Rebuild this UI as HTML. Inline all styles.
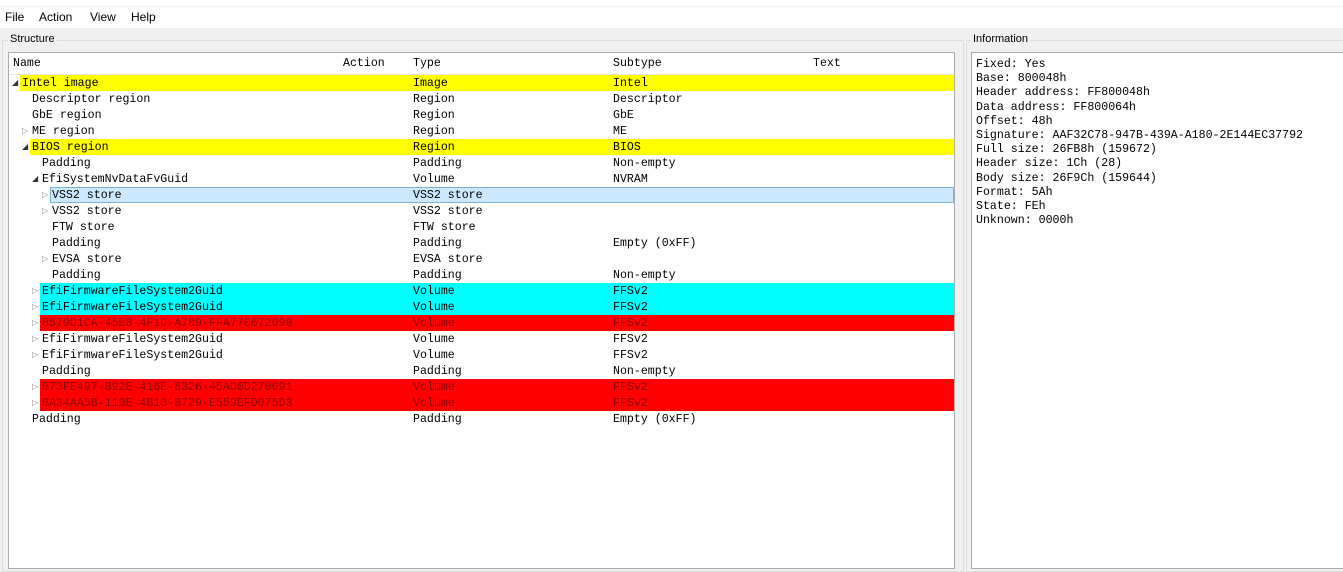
<!DOCTYPE html>
<html><head><style>
body{margin:0;width:1343px;height:562px;background:#f0f0f0;position:relative;overflow:hidden;font-family:"Liberation Sans",sans-serif;}
.m{position:absolute;font-family:"Liberation Mono",monospace;font-size:11.6px;line-height:16px;color:#000;white-space:pre}
.menu{position:absolute;top:0;left:0;width:1343px;height:28px;background:#fff;font-size:12px}
.menu span{position:absolute;top:10px}
.gb{position:absolute;border:1px solid #dcdcdc}
.lbl{position:absolute;font-size:11px;background:#f0f0f0;padding:0 2px;color:#000}
.panel{position:absolute;background:#fff;border:1px solid #adadad}
.arr{position:absolute;font-size:8px;color:#888;line-height:16px}
</style></head><body>
<div class="menu"><span style="left:5px">File</span><span style="left:39px">Action</span><span style="left:90px">View</span><span style="left:131px">Help</span></div>
<div style="position:absolute;top:6px;left:0;width:1343px;height:1px;background:#f0f0f0"></div>
<div class="gb" style="left:2px;top:40px;width:960px;height:530px"></div>
<div class="lbl" style="left:8px;top:33px">Structure</div>
<div class="gb" style="left:966px;top:40px;width:380px;height:530px"></div>
<div class="lbl" style="left:971px;top:33px">Information</div>
<div class="panel" style="left:8px;top:52px;width:945px;height:515px">
<div style="position:absolute;left:0;top:0;width:945px;height:21px;border-bottom:1px solid #e5e5e5"></div>
<div class="m" style="left:4px;top:3px">Name</div>
<div class="m" style="left:334px;top:3px">Action</div>
<div class="m" style="left:404px;top:3px">Type</div>
<div class="m" style="left:604px;top:3px">Subtype</div>
<div class="m" style="left:804px;top:3px">Text</div>
<div id="rows"></div>
</div>
<div class="panel" style="left:971px;top:52px;width:380px;height:515px">
<div class="m" style="left:4px;top:5px;line-height:14.2px">Fixed: Yes
Base: 800048h
Header address: FF800048h
Data address: FF800064h
Offset: 48h
Signature: AAF32C78-947B-439A-A180-2E144EC37792
Full size: 26FB8h (159672)
Header size: 1Ch (28)
Body size: 26F9Ch (159644)
Format: 5Ah
State: FEh
Unknown: 0000h</div>
</div>
<script>
var R=[
[0,'d','Intel image','Image','Intel','#ffff00'],
[1,'','Descriptor region','Region','Descriptor'],
[1,'','GbE region','Region','GbE'],
[1,'c','ME region','Region','ME'],
[1,'d','BIOS region','Region','BIOS','#ffff00'],
[2,'','Padding','Padding','Non-empty'],
[2,'d','EfiSystemNvDataFvGuid','Volume','NVRAM'],
[3,'c','VSS2 store','VSS2 store','','sel'],
[3,'c','VSS2 store','VSS2 store',''],
[3,'','FTW store','FTW store',''],
[3,'','Padding','Padding','Empty (0xFF)'],
[3,'c','EVSA store','EVSA store',''],
[3,'','Padding','Padding','Non-empty'],
[2,'c','EfiFirmwareFileSystem2Guid','Volume','FFSv2','#00ffff'],
[2,'c','EfiFirmwareFileSystem2Guid','Volume','FFSv2','#00ffff'],
[2,'c','8579D1CA-45E8-4F1C-A789-FFA770672099','Volume','FFSv2','#ff0000'],
[2,'c','EfiFirmwareFileSystem2Guid','Volume','FFSv2'],
[2,'c','EfiFirmwareFileSystem2Guid','Volume','FFSv2'],
[2,'','Padding','Padding','Non-empty'],
[2,'c','B73FE497-B92E-416E-8326-45AD0D270091','Volume','FFSv2','#ff0000'],
[2,'c','BA34AA5B-110E-4B10-B729-E559EFD075D3','Volume','FFSv2','#ff0000'],
[1,'','Padding','Padding','Empty (0xFF)']];
var h='';
R.forEach(function(r,i){
 var top=22+i*16, tx=13+10*r[0], bg=r[5], col=bg=='#ff0000'?'#8b0000':'#000';
 if(bg=='sel') h+='<div style="position:absolute;left:'+(tx-2)+'px;top:'+top+'px;width:'+(945-tx)+'px;height:14px;background:#cce8ff;border:1px solid #7ab4d9"></div>';
 else if(bg) h+='<div style="position:absolute;left:'+(tx-2)+'px;top:'+top+'px;width:'+(945-tx+2)+'px;height:16px;background:'+bg+'"></div>';
 if(r[1]=='d') h+='<div class="arr" style="left:'+(tx-10)+'px;top:'+top+'px;color:#333">&#9698;</div>';
 if(r[1]=='c') h+='<div class="arr" style="left:'+(tx-10)+'px;top:'+top+'px">&#9655;</div>';
 h+='<div class="m" style="color:'+col+';left:'+tx+'px;top:'+(top+1)+'px">'+r[2]+'</div>';
 h+='<div class="m" style="color:'+col+';left:404px;top:'+(top+1)+'px">'+r[3]+'</div>';
 h+='<div class="m" style="color:'+col+';left:604px;top:'+(top+1)+'px">'+r[4]+'</div>';
});
document.getElementById('rows').innerHTML=h;
</script>
</body></html>
